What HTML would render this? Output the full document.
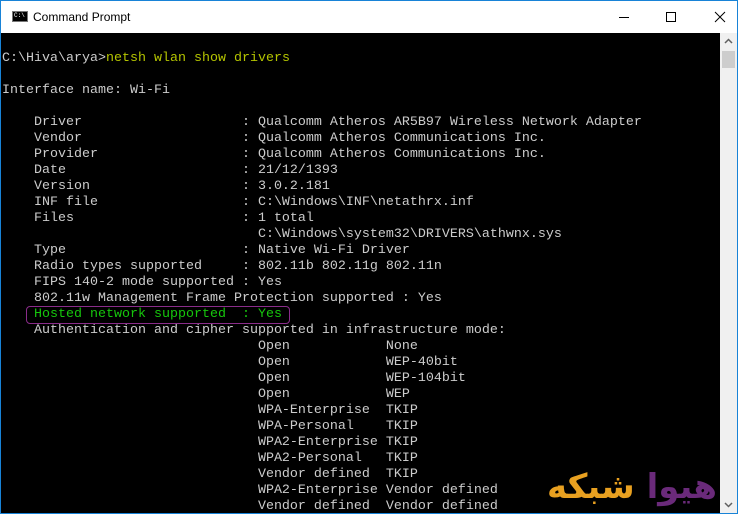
<!DOCTYPE html>
<html><head><meta charset="utf-8"><style>
html,body{margin:0;padding:0;width:738px;height:514px;overflow:hidden;background:#fff}
.win{position:absolute;left:0;top:0;width:736px;height:512px;border:1px solid #1883d7;background:#fff}
.title{position:absolute;left:0;top:0;width:736px;height:32px;background:#fff;font-family:"Liberation Sans",sans-serif;font-size:12px;color:#000}
.title .t{position:absolute;left:32px;top:9px}
.ico{position:absolute;left:11px;top:10px;width:16px;height:11px;background:#000;border:1px solid #777;box-sizing:border-box}
.ico span{position:absolute;left:1px;top:0;color:#fff;font-size:6px;font-family:"Liberation Mono",monospace;line-height:8px}
.con{position:absolute;left:0;top:32px;width:719px;height:480px;background:#000;overflow:hidden}
pre{margin:0;font-family:"Liberation Mono",monospace;font-size:13.33px;line-height:16px;color:#cccccc;position:absolute;left:1px;top:2px}
.g{color:#b4c400}.h{color:#16c60c}
.box{position:absolute;left:25px;top:273px;width:262px;height:16px;border:1px solid #8a2c8a;border-radius:4px}
.sb{position:absolute;left:719px;top:32px;width:17px;height:480px;background:#f0f0f0}
.thumb{position:absolute;left:2px;top:18px;width:13px;height:17px;background:#cdcdcd}
.logo{position:absolute;left:541px;top:430px;width:180px;text-align:center;font-family:"DejaVu Sans",sans-serif;font-weight:bold;font-size:34px;line-height:48px;direction:rtl;white-space:nowrap}
</style></head><body><div class="win">
<div class="title"><div class="ico"><span>C:\</span></div><div class="t">Command Prompt</div>
<svg style="position:absolute;left:610px;top:8px" width="120" height="18"><line x1="8" y1="8.5" x2="18" y2="8.5" stroke="#000"/><rect x="55.5" y="3.5" width="9" height="9" fill="none" stroke="#000"/><path d="M104 3L114 13M114 3L104 13" stroke="#000"/></svg></div>
<div class="con"><pre>

C:\Hiva\arya&gt;<span class="g">netsh wlan show drivers</span>

Interface name: Wi-Fi

    Driver                    : Qualcomm Atheros AR5B97 Wireless Network Adapter
    Vendor                    : Qualcomm Atheros Communications Inc.
    Provider                  : Qualcomm Atheros Communications Inc.
    Date                      : 21/12/1393
    Version                   : 3.0.2.181
    INF file                  : C:\Windows\INF\netathrx.inf
    Files                     : 1 total
                                C:\Windows\system32\DRIVERS\athwnx.sys
    Type                      : Native Wi-Fi Driver
    Radio types supported     : 802.11b 802.11g 802.11n
    FIPS 140-2 mode supported : Yes
    802.11w Management Frame Protection supported : Yes
    <span class="h">Hosted network supported  : Yes</span>
    Authentication and cipher supported in infrastructure mode:
                                Open            None
                                Open            WEP-40bit
                                Open            WEP-104bit
                                Open            WEP
                                WPA-Enterprise  TKIP
                                WPA-Personal    TKIP
                                WPA2-Enterprise TKIP
                                WPA2-Personal   TKIP
                                Vendor defined  TKIP
                                WPA2-Enterprise Vendor defined
                                Vendor defined  Vendor defined</pre>
<div class="box"></div>
<div class="logo"><span style="color:#6a2a7a">هیوا</span> <span style="color:#e8a020">شبکه</span></div>
</div>
<div class="sb"><svg width="17" height="17"><path d="M5 10L8.5 6.5L12 10" stroke="#606060" stroke-width="1.5" fill="none"/></svg><div class="thumb"></div><svg style="position:absolute;left:0;top:463px" width="17" height="17"><path d="M5 7L8.5 10.5L12 7" stroke="#606060" stroke-width="1.5" fill="none"/></svg></div>
</div></body></html>
